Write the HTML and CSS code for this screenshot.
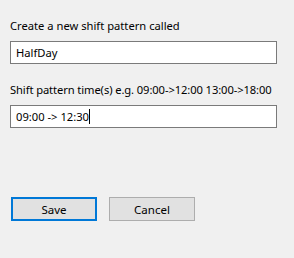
FILE: index.html
```html
<!DOCTYPE html>
<html lang="en">
<head>
  <meta charset="UTF-8">
  <title>New Shift Pattern</title>
  <link rel="stylesheet" href="styles.css">
</head>
<body>
  <div class="dialog">
    <label class="field-label" for="pattern-name">Create a new shift pattern called</label>
    <div class="text-box">HalfDay</div>

    <label class="field-label second" for="pattern-times">Shift pattern time(s) e.g. 09:00-&gt;12:00 13:00-&gt;18:00</label>
    <div class="text-box">09:00 -&gt; 12:30<span class="caret"></span></div>

    <div class="buttons">
      <button class="btn default">Save</button>
      <button class="btn">Cancel</button>
    </div>
  </div>
</body>
</html>
```

FILE: styles.css
```css
body {
  margin: 0;
  background-color: #f0f0f0;
  color: #000;
  font-family: "Noto Sans", "DejaVu Sans", sans-serif;
  font-size: 11.2px;
  width: 294px;
  height: 258px;
  overflow: hidden;
}
.dialog {
  padding: 18px 0 0 10px;
  width: 267px;
}
.field-label {
  display: block;
  line-height: 16px;
  height: 16px;
  margin-bottom: 7px;
  white-space: nowrap;
}
.field-label.second {
  margin-top: 18px;
  letter-spacing: -0.1px;
}
.text-box {
  box-sizing: border-box;
  height: 23px;
  border: 1px solid #7a7a7a;
  background-color: #fff;
  padding: 0 5px;
  line-height: 21px;
}
.caret {
  display: inline-block;
  width: 1px;
  height: 15px;
  background-color: #000;
  vertical-align: -3px;
}
.buttons {
  display: flex;
  gap: 12px;
  margin-top: 69px;
  margin-left: 1px;
}
.btn {
  box-sizing: border-box;
  width: 86px;
  height: 24px;
  font-family: inherit;
  font-size: 11.5px;
  color: #000;
  background-color: #e1e1e1;
  border: 1px solid #adadad;
  padding: 0;
}
.btn.default {
  border: 2px solid #0078d7;
}
```
